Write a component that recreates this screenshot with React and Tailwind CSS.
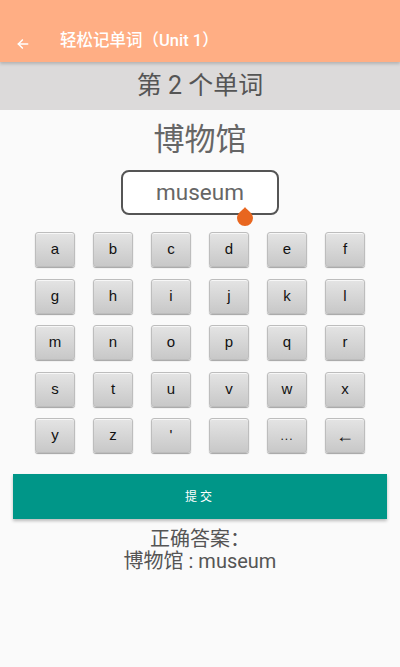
import React from "react";

const rows = [
  ["a", "b", "c", "d", "e", "f"],
  ["g", "h", "i", "j", "k", "l"],
  ["m", "n", "o", "p", "q", "r"],
  ["s", "t", "u", "v", "w", "x"],
  ["y", "z", "'", "", "...", "←"],
];

function Key({ label }) {
  return (
    <div className="w-[40px] h-[35px] rounded-[3px] bg-gradient-to-b from-[#e4e4e4] via-[#d6d6d6] to-[#c8c8c8] border border-[#bdbdbd] shadow-[0_1px_1px_rgba(0,0,0,0.35),inset_0_1px_0_rgba(255,255,255,0.7)] flex items-center justify-center text-[15px] text-[#111] font-['Liberation_Sans',sans-serif]">
      {label === "..." ? <span className="text-[12px] tracking-[1px]">...</span> : label === "←" ? <span className="text-[18px] leading-none">←</span> : label}
    </div>
  );
}

export default function App() {
  return (
    <div className="w-[400px] h-[667px] bg-[#fafafa] font-['Roboto','Noto_Sans_CJK_SC',sans-serif] flex flex-col">
      <div className="h-[62px] bg-[#ffae84] flex items-end pb-[11px] shadow-[0_2px_3px_rgba(0,0,0,0.18)] relative z-10">
        <div className="w-[60px] flex items-center pl-[16px]">
          <svg width="14" height="14" viewBox="0 0 24 24" fill="none" stroke="#fff" strokeWidth="2.6" strokeLinecap="round" strokeLinejoin="round">
            <path d="M20 12H4" />
            <path d="M11 5l-7 7 7 7" />
          </svg>
        </div>
        <div className="text-white text-[16.5px] leading-[20px] font-medium">轻松记单词（Unit 1）</div>
      </div>
      <div className="h-[48px] bg-[#dcdada] flex items-center justify-center text-[25px] text-[#555]">第 2 个单词</div>
      <div className="mt-[11px] text-center text-[31px] leading-[38px] text-[#666]">博物馆</div>
      <div className="mt-[11px] flex justify-center">
        <div className="relative w-[158px] h-[45px] border-2 border-[#555] rounded-[8px] bg-white flex items-center justify-center text-[22.5px] text-[#666]">
          museum
          <svg className="absolute left-[113px] top-[34px]" width="18" height="20" viewBox="0 0 18 20">
            <path d="M9 1 C11 4 17 7 17 12 A8 8 0 0 1 1 12 C1 7 7 4 9 1 Z" fill="#e8661f" />
          </svg>
        </div>
      </div>
      <div className="mt-[17px] flex flex-col gap-[11.5px] px-[35px]">
        {rows.map((r, i) => (
          <div key={i} className="flex gap-[18px]">
            {r.map((k, j) => (
              <Key key={j} label={k} />
            ))}
          </div>
        ))}
      </div>
      <div className="mt-[21px] mx-[13px] h-[45px] bg-[#009688] shadow-[0_2px_3px_rgba(0,0,0,0.25)] flex items-center justify-center text-white text-[12px] tracking-[3px]">提交</div>
      <div className="mt-[9px] text-center text-[20px] leading-[22px] text-[#555]">
        <div>正确答案：</div>
        <div>博物馆 : museum</div>
      </div>
    </div>
  );
}
